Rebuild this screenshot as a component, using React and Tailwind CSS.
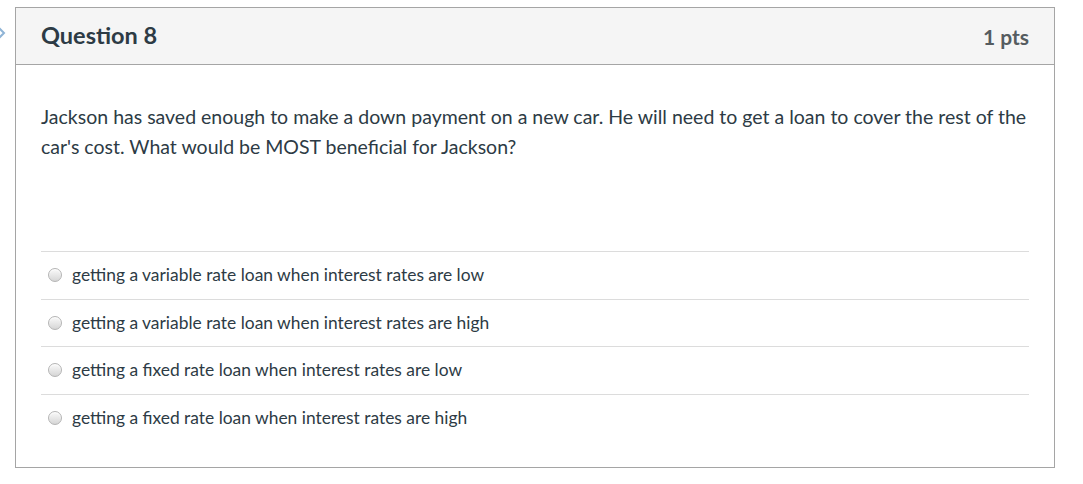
import React from 'react';

const options = [
    'getting a variable rate loan when interest rates are low',
    'getting a variable rate loan when interest rates are high',
    'getting a fixed rate loan when interest rates are low',
    'getting a fixed rate loan when interest rates are high',
];

const Radio = () => (
    <span className="block w-[14px] h-[14px] rounded-full border border-[#b4b4b4] bg-gradient-to-b from-[#fafafa] to-[#d6d6d6] shadow-[inset_0_1px_1px_rgba(255,255,255,0.8)]"></span>
);

const App = () => {
    return (
        <div className="relative w-[1083px] h-[484px] bg-white pl-[15px] pt-[7px]" style={{ fontFamily: 'Lato, "Open Sans", sans-serif' }}>
            <svg className="absolute left-[-2px] top-[27px]" width="8" height="12" viewBox="0 0 8 12">
                <path d="M1 1l5 5-5 5" fill="none" stroke="#8fb4d6" strokeWidth="2" />
            </svg>
            <div className="w-[1040px] h-[461px] border border-[#a5a5a5] text-[#2d3b45]">
                <div className="h-[57px] bg-[#f5f5f5] border-b border-[#a5a5a5] flex items-center justify-between px-[25px]">
                    <h2 className="text-[23.5px] font-bold leading-none">Question 8</h2>
                    <span className="text-[21px] font-bold text-[#555c60] leading-none">1 pts</span>
                </div>
                <div className="px-[25px] pt-[37px]">
                    <p className="text-[19.5px] leading-[30px]">
                        Jackson has saved enough to make a down payment on a new car. He will need to get a loan to cover the rest of the car's cost. What would be MOST beneficial for Jackson?
                    </p>
                    <div className="mt-[89px]">
                        {options.map((opt, i) => (
                            <div key={i} className="flex items-center h-[47.5px] border-t border-[#dcdcdc] pl-[7px]">
                                <Radio />
                                <span className="ml-[10px] text-[17.4px] text-[#2d3b45]">{opt}</span>
                            </div>
                        ))}
                    </div>
                </div>
            </div>
        </div>
    );
};

export default App;
